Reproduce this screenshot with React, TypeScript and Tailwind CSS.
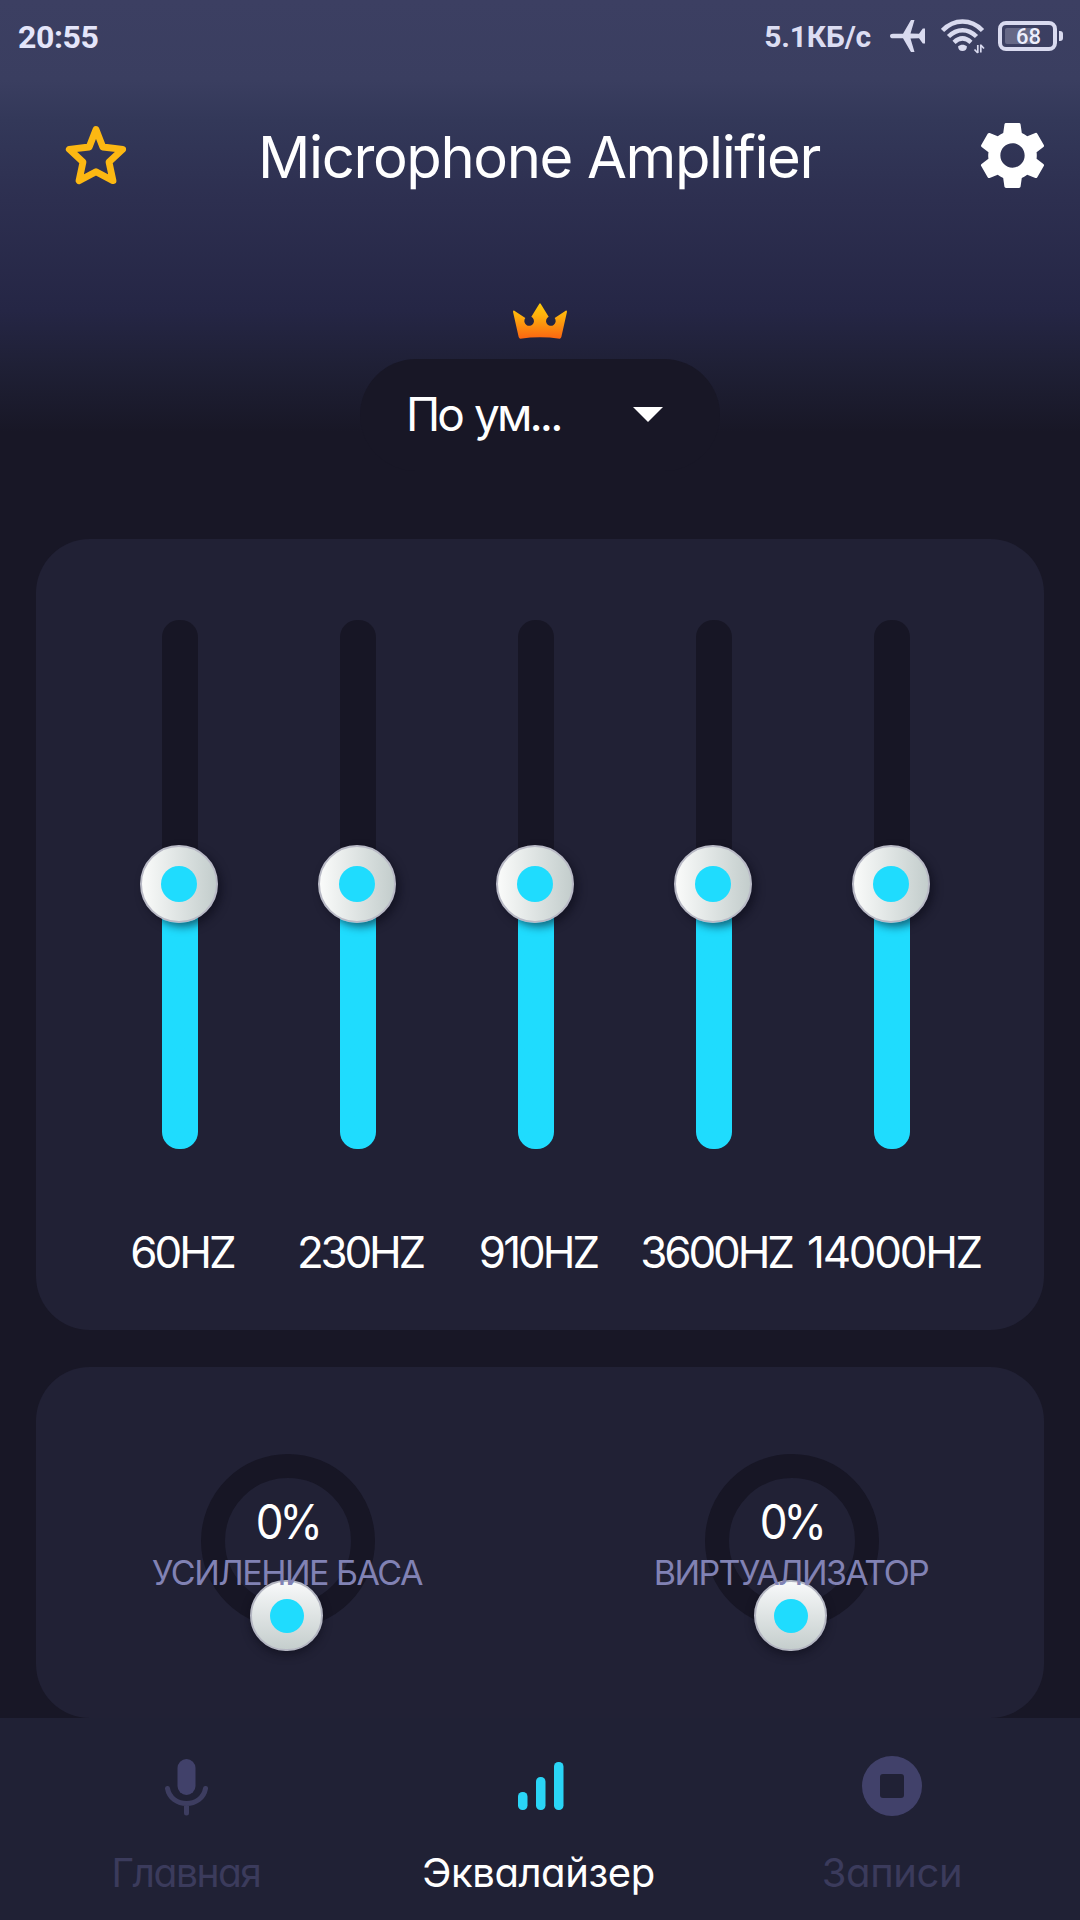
import React from "react";
import { MdSettings } from "react-icons/md";

const bands = [
  { label: "60HZ", spacing: "tracking-[-3px]" },
  { label: "230HZ", spacing: "tracking-[-3.200px]" },
  { label: "910HZ", spacing: "tracking-[-3px]" },
  { label: "3600HZ", spacing: "tracking-[-3.100px]" },
  { label: "14000HZ", spacing: "tracking-[-2.300px]" },
];

function StatusBar() {
  return (
    <div className="flex h-[72px] items-center pl-[18px] pr-[17px] font-['Roboto',sans-serif] text-[#e4e5fa]">
      <span className="pt-[2px] text-[32px] font-bold leading-[70px] tracking-[-0.4px]">20:55</span>
      <span className="ml-auto pt-[1px] text-[30px] font-bold leading-[71px] tracking-[-0.200px] text-[#dcddf2]">5.1КБ/с</span>
      <svg className="ml-[19px]" width="36" height="32" viewBox="0 0 36 32" fill="#d9daef">
        <path d="M0 16c0-1.4 1.2-2.3 3-2.3h10L20.500.8c.4-.8 1-.8 2.400-.8L24.500 0 20.500 13.500l8.500.3 3.800-5.200h2.200v14.800h-2.200L29 18.200l-8.500.3L24.500 32h-1.700c-1.300 0-1.900 0-2.300-.8L13 18.300H3C1.200 18.300 0 17.400 0 16z" />
      </svg>
      <svg className="ml-[15px]" width="44" height="36" viewBox="0 0 44 36" fill="none" stroke="#d9daef" strokeWidth="4.500">
        <path d="M1.500 12.500C13 .5 30 .5 41.500 12.500" />
        <path d="M7.500 18.500C16 10 27 10 35.500 18.500" />
        <path d="M13 24.300c5.500-5 11.500-5 17 0" />
        <path d="M17 28.500C19.500 26 23.500 26 26 28.500Q25.500 33 21.500 33Q17.500 33 17 28.500z" fill="#d9daef" stroke="none" />
        <path d="M36.800 27v8M39.800 26.500v8M33.500 31.500l3.300 3.500M39.800 27l3.200 3.500" strokeWidth="1.700" />
      </svg>
      <div className="ml-[13px] flex items-center gap-[2px]">
        <div className="flex h-[30px] w-[59px] items-center rounded-[8px] border-[4px] border-[#d9daef] p-[3px]">
          <div className="flex h-full w-full items-center justify-center rounded-[2px] bg-linear-to-r from-[#666886] from-68% to-transparent to-68% pl-[2px] pt-[2px] text-[22px] font-medium leading-none text-[#eceefd]">
            68
          </div>
        </div>
        <div className="h-[10px] w-[4px] rounded-r-[3px] bg-[#d9daef]" />
      </div>
    </div>
  );
}

function Header() {
  return (
    <div className="flex h-[168px] items-center justify-between pl-[60px] pr-[27px]">
      <svg width="72" height="72" viewBox="60 120 72 72" fill="none" stroke="#fcb812" strokeWidth="6.800" strokeLinejoin="round">
        <path d="M96 129.500L102.800 147L122.700 149.300L109 162L113 180.700L96 171.700L79 180.700L83 162L69.300 149.300L89.200 147Z" />
      </svg>
      <h1 className="mr-[26px] mt-[2px] whitespace-nowrap text-[58px] leading-[80px] tracking-[-1.400px] text-white">Microphone Amplifier</h1>
      <MdSettings size={81} className="mb-[2px] text-white" />
    </div>
  );
}

function Preset() {
  return (
    <div className="flex flex-col items-center">
      <svg className="mt-[61px]" width="58" height="40" viewBox="0 0 174 120">
        <defs>
          <linearGradient id="crown" x1="0" y1="0" x2="0" y2="1">
            <stop offset="0" stopColor="#ffcb08" />
            <stop offset="0.35" stopColor="#fdb00d" />
            <stop offset="1" stopColor="#fc6511" />
          </linearGradient>
        </defs>
        <path
          fill="url(#crown)"
          d="M6 32C6 29 8 28 10 29L43 51A14.500 14.500 0 1 0 61 47L85 8Q87 5 89 8L113 47A14.500 14.500 0 1 0 131 51L164 29C166 28 168 29 168 32L151 108Q149 113 146 113Q87 105 28 113Q25 113 23 108Z"
        />
      </svg>
      <div className="mt-[18px] flex h-[112px] w-[360px] items-center rounded-[56px] bg-[#181726] pb-[2px] pl-[46px] pr-[57px]">
        <span className="text-[46px] leading-[56px] tracking-[-2.900px] text-white [word-spacing:2px]">По ум...</span>
        <svg className="ml-auto" width="30" height="15" viewBox="0 0 30 15" fill="#fff">
          <path d="M0 0h30L15 15z" />
        </svg>
      </div>
    </div>
  );
}

function BandSlider() {
  return (
    <div className="flex w-[178px] justify-center">
      <div className="relative h-[529px] w-[36px] overflow-visible rounded-[17px] bg-linear-to-b from-[#171625] from-50% to-[#1fdcfe] to-50%">
        <div className="absolute left-[-22px] top-[225px] flex size-[78px] items-center justify-center rounded-full border-[2.500px] border-[#b9bac6] bg-linear-to-r from-[#fafbfa] to-[#c3cdcc] shadow-[4px_4px_8px_rgba(10,10,22,0.55)]">
          <div className="size-[36px] rounded-full bg-[#1fdcfe]" />
        </div>
      </div>
    </div>
  );
}

function Equalizer() {
  return (
    <section className="mx-[36px] mt-[68px] h-[791px] shrink-0 rounded-[54px] bg-[#212135] pt-[81px]">
      <div className="ml-[55px] flex">
        {bands.map((b) => (
          <BandSlider key={b.label} />
        ))}
      </div>
      <div className="ml-[57px] mt-[73px] flex">
        {bands.map((b) => (
          <div key={b.label} className="flex w-[178px] justify-center whitespace-nowrap text-[44px] leading-[60px] text-white">
            <span className={b.spacing}>{b.label}</span>
          </div>
        ))}
      </div>
    </section>
  );
}

function Knob({ label, spacing }: { label: string; spacing: string }) {
  return (
    <div className="flex w-[504px] justify-center pt-[87px]">
      <div className="relative flex size-[174px] flex-col items-center rounded-full border-[24px] border-[#171625]">
        <div className="absolute left-[25px] top-[102px] flex h-[71px] w-[73px] items-center justify-center rounded-full border-[2px] border-[#b4b6c2] bg-linear-to-b from-[#f8f9fa] to-[#c5cecd] shadow-[0_4px_8px_rgba(10,10,22,0.5)]">
          <div className="size-[34px] rounded-full bg-[#1fdcfe]" />
        </div>
        <span className="relative mr-[2px] mt-[15px] scale-x-92 text-[48px] leading-[58px] tracking-[-4.500px] text-white">0%</span>
        <span className="relative mr-[2px] mt-[1px] whitespace-nowrap text-[34px] leading-[42px] text-[#8182b4]">
          <span className={spacing}>{label}</span>
        </span>
      </div>
    </div>
  );
}

function NavItem({ icon, label, className }: { icon: React.ReactNode; label: string; className: string }) {
  return (
    <div className="flex w-[353px] flex-col items-center">
      <div className="flex h-[60px] items-center">{icon}</div>
      <span className={className}>{label}</span>
    </div>
  );
}

function BottomNav() {
  return (
    <nav className="flex h-[202px] shrink-0 justify-center bg-[#202135] pr-[2px] pt-[38px]">
      <NavItem
        label="Главная"
        className="mt-[33px] text-[39px] leading-[48px] tracking-[-1.500px] text-[#3b3b5c]"
        icon={
          <svg width="44" height="60" viewBox="0 0 44 60">
            <rect x="13.500" y="3" width="18" height="36" rx="9" fill="#41416a" />
            <path d="M3.500 32.500C7 52.500 38 52.500 41.500 32.500M22.500 47.500V57" fill="none" stroke="#3d3d60" strokeWidth="5" strokeLinecap="round" />
          </svg>
        }
      />
      <NavItem
        label="Эквалайзер"
        className="mr-[1px] mt-[33px] text-[40px] leading-[48px] tracking-[-0.400px] text-white"
        icon={
          <svg className="ml-[3px]" width="46" height="48" viewBox="0 0 46 48" fill="#2ad5f6">
            <rect y="30" width="9.500" height="18" rx="4.500" />
            <rect x="18" y="15" width="9.500" height="33" rx="4.500" />
            <rect x="36" width="9.500" height="48" rx="4.500" />
          </svg>
        }
      />
      <NavItem
        label="Записи"
        className="mt-[33px] text-[40px] leading-[48px] tracking-[-0.400px] text-[#3b3b5c]"
        icon={
          <svg width="60" height="60" viewBox="0 0 60 60">
            <circle cx="30" cy="30" r="30" fill="#41416a" />
            <rect x="18" y="18" width="24" height="24" rx="3" fill="#202135" />
          </svg>
        }
      />
    </nav>
  );
}

export default function App() {
  return (
    <main className="flex h-[1920px] w-[1080px] flex-col overflow-hidden bg-[#181726] bg-[linear-gradient(to_bottom,#3c3f62_0px,#3a3e60_80px,#333859_120px,#2d2f50_200px,#252645_310px,#1f2036_365px,#181726_432px)] font-['Inter',sans-serif] [font-feature-settings:'cv11']">
      <StatusBar />
      <Header />
      <Preset />
      <Equalizer />
      <section className="mx-[36px] mt-[37px] flex h-[351px] shrink-0 rounded-[54px] bg-[#212135]">
        <Knob label="УСИЛЕНИЕ БАСА" spacing="tracking-[-1.500px]" />
        <Knob label="ВИРТУАЛИЗАТОР" spacing="tracking-[-1.600px]" />
      </section>
      <BottomNav />
    </main>
  );
}
